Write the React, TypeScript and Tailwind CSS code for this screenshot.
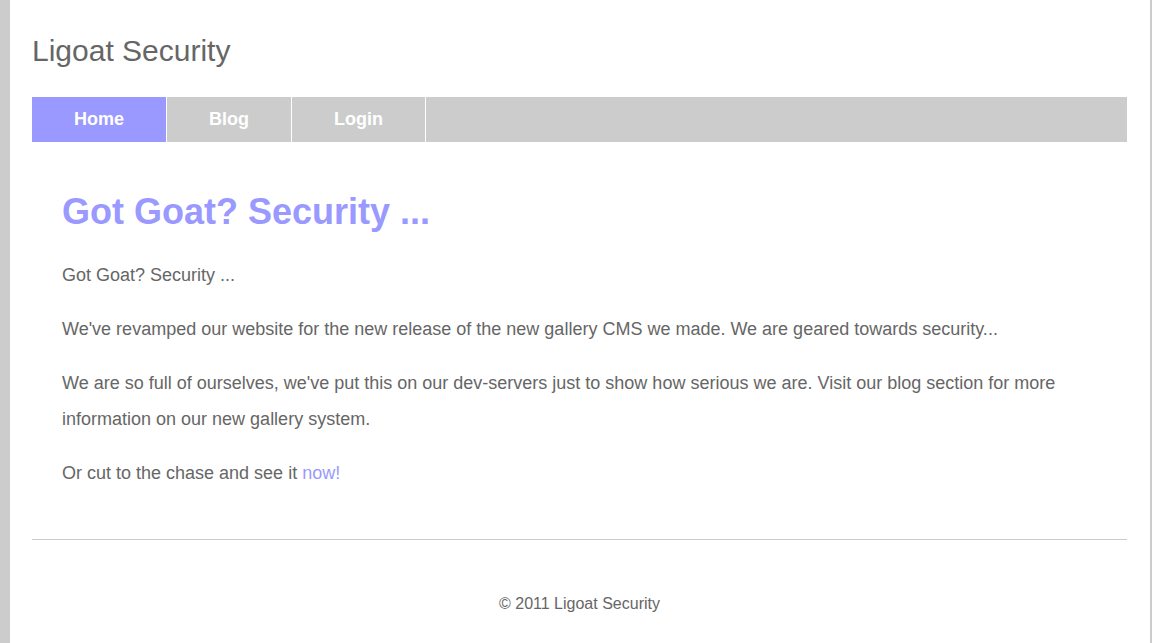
export default function App() {
  const tabs = [
    { label: "Home", active: true },
    { label: "Blog", active: false },
    { label: "Login", active: false },
  ];

  return (
    <div className="min-h-[643px] bg-[#cccccc] pl-[10px] pr-[2px] font-['Liberation_Sans',Arial,sans-serif]">
      <div className="min-h-[643px] bg-white pl-[22px] pr-[23px] pt-[33px] text-[#666666]">
        <div className="text-[30px] leading-[36px]">Ligoat Security</div>

        <nav className="mt-[28px] flex h-[45px] bg-[#cccccc]">
          {tabs.map((t) => (
            <a
              key={t.label}
              href="#"
              className={
                t.active
                  ? "flex items-center border-r border-white bg-[#9999ff] px-[42px] text-[18px] font-bold text-white"
                  : "flex items-center border-r border-white px-[42px] text-[18px] font-bold text-white"
              }
            >
              {t.label}
            </a>
          ))}
        </nav>

        <div className="px-[30px] pt-[52px] pb-[18px]">
          <h1 className="mb-[27px] text-[36px] font-bold leading-[36px] text-[#9999ff]">
            Got Goat? Security ...
          </h1>
          <p className="mb-[18px] text-[18px] leading-[36px]">Got Goat? Security ...</p>
          <p className="mb-[18px] text-[18px] leading-[36px]">
            We've revamped our website for the new release of the new gallery CMS we made. We are geared towards security...
          </p>
          <p className="mb-[18px] text-[18px] leading-[36px]">
            We are so full of ourselves, we've put this on our dev-servers just to show how serious we are. Visit our blog section for more information on our new gallery system.
          </p>
          <p className="mb-[18px] text-[18px] leading-[36px]">
            Or cut to the chase and see it{" "}
            <a href="#" className="text-[#9999ff]">
              now!
            </a>
          </p>
        </div>

        <div className="mt-[12px] border-t border-[#cccccc] pt-[52px] pb-[20px] text-center text-[16px] leading-[24px]">
          © 2011 Ligoat Security
        </div>
      </div>
    </div>
  );
}
